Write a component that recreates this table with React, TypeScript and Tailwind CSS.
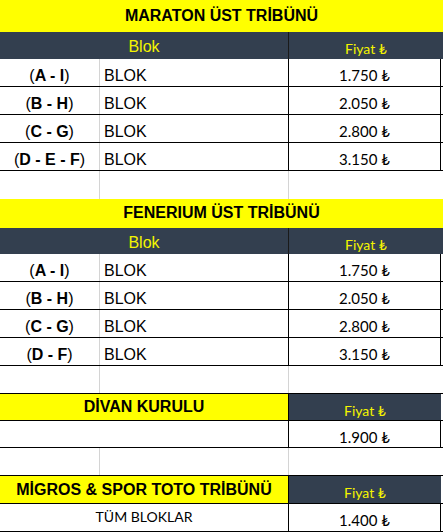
import React from "react";

const arial = { fontFamily: '"Liberation Sans", Arial, sans-serif' };
const calibri = { fontFamily: 'Lato, "DejaVu Sans", sans-serif' };

function Title({ text, h }: { text: string; h: string }) {
  return (
    <div className={`${h} bg-[#ffff00] flex items-center justify-center w-full`}>
      <div className="w-[441px] text-center text-[16px] font-bold text-black" style={arial}>
        {text}
      </div>
    </div>
  );
}

function Header({ h }: { h: string }) {
  return (
    <div className={`${h} bg-[#333f4f] flex w-full`}>
      <div className="w-[289px] flex justify-center items-start pt-[3px] text-[16px] text-[#f5f500] border-r border-[#1a1a1a]" style={arial}>
        Blok
      </div>
      <div className="flex-1 flex justify-center items-start pt-[6px] text-[14px] text-[#f5f500]" style={calibri}>
        Fiyat ₺
      </div>
    </div>
  );
}

function Label({ parts }: { parts: string[] }) {
  return (
    <span>
      <span className="font-normal">(</span>
      {parts.map((p, i) => (
        <React.Fragment key={i}>
          {i > 0 && <span className="font-bold"> - </span>}
          <span className="font-bold">{p}</span>
        </React.Fragment>
      ))}
      <span className="font-normal">)</span>
    </span>
  );
}

function Row({ parts, price }: { parts: string[]; price: string }) {
  return (
    <div className="h-[28px] flex w-full border-b border-black">
      <div className="w-[100px] flex items-start justify-center pt-[5px] text-[16px] text-black border-r border-[#d4d4d4]" style={arial}>
        <Label parts={parts} />
      </div>
      <div className="w-[189px] flex items-start pl-[4px] pt-[5px] text-[16px] text-black border-r border-black" style={arial}>
        BLOK
      </div>
      <div className="w-[152px] flex items-start justify-center pt-[8px] text-[15px] leading-[17px] text-black border-r border-black" style={calibri}>
        {price}
      </div>
    </div>
  );
}

function Empty({ h }: { h: string }) {
  return (
    <div className={`${h} flex w-full bg-white`}>
      <div className="w-[100px] border-r border-[#d4d4d4]" />
      <div className="w-[189px] border-r border-[#d4d4d4]" />
      <div className="w-[152px]" />
    </div>
  );
}

function SplitHead({ text, h }: { text: string; h: string }) {
  return (
    <div className={`${h} flex w-full border-y border-black`}>
      <div className="w-[289px] bg-[#ffff00] flex items-center justify-center text-[16px] font-bold text-black border-r border-black" style={arial}>
        {text}
      </div>
      <div className="w-[152px] bg-[#333f4f] flex items-start justify-center pt-[6px] text-[14px] text-[#f5f500]" style={calibri}>
        Fiyat ₺
      </div>
    </div>
  );
}

function SingleRow({ left, price, h }: { left: string; price: string; h: string }) {
  return (
    <div className={`${h} flex w-full border-b border-black`}>
      <div className="w-[289px] flex items-start justify-center pt-[5px] text-[14px] leading-[16px] text-black border-r border-black" style={calibri}>
        {left}
      </div>
      <div className="w-[152px] flex items-start justify-center pt-[8px] text-[15px] leading-[16px] text-black border-r border-black" style={calibri}>
        {price}
      </div>
    </div>
  );
}

export default function App() {
  const maraton: [string[], string][] = [
    [["A", "I"], "1.750 ₺"],
    [["B", "H"], "2.050 ₺"],
    [["C", "G"], "2.800 ₺"],
    [["D", "E", "F"], "3.150 ₺"],
  ];
  const fenerium: [string[], string][] = [
    [["A", "I"], "1.750 ₺"],
    [["B", "H"], "2.050 ₺"],
    [["C", "G"], "2.800 ₺"],
    [["D", "F"], "3.150 ₺"],
  ];
  return (
    <div className="w-[443px] h-[532px] bg-white overflow-hidden flex flex-col">
      <Title text="MARATON ÜST TRİBÜNÜ" h="h-[32px]" />
      <Header h="h-[27px]" />
      {maraton.map(([p, pr], i) => (
        <Row key={i} parts={p} price={pr} />
      ))}
      <Empty h="h-[28px]" />
      <Title text="FENERIUM ÜST TRİBÜNÜ" h="h-[29px]" />
      <Header h="h-[26px]" />
      {fenerium.map(([p, pr], i) => (
        <Row key={i} parts={p} price={pr} />
      ))}
      <Empty h="h-[28px]" />
      <SplitHead text="DİVAN KURULU" h="h-[28px]" />
      <SingleRow left="" price="1.900 ₺" h="h-[27px]" />
      <Empty h="h-[27px]" />
      <SplitHead text="MİGROS & SPOR TOTO TRİBÜNÜ" h="h-[29px]" />
      <SingleRow left="TÜM BLOKLAR" price="1.400 ₺" h="h-[28px]" />
    </div>
  );
}
